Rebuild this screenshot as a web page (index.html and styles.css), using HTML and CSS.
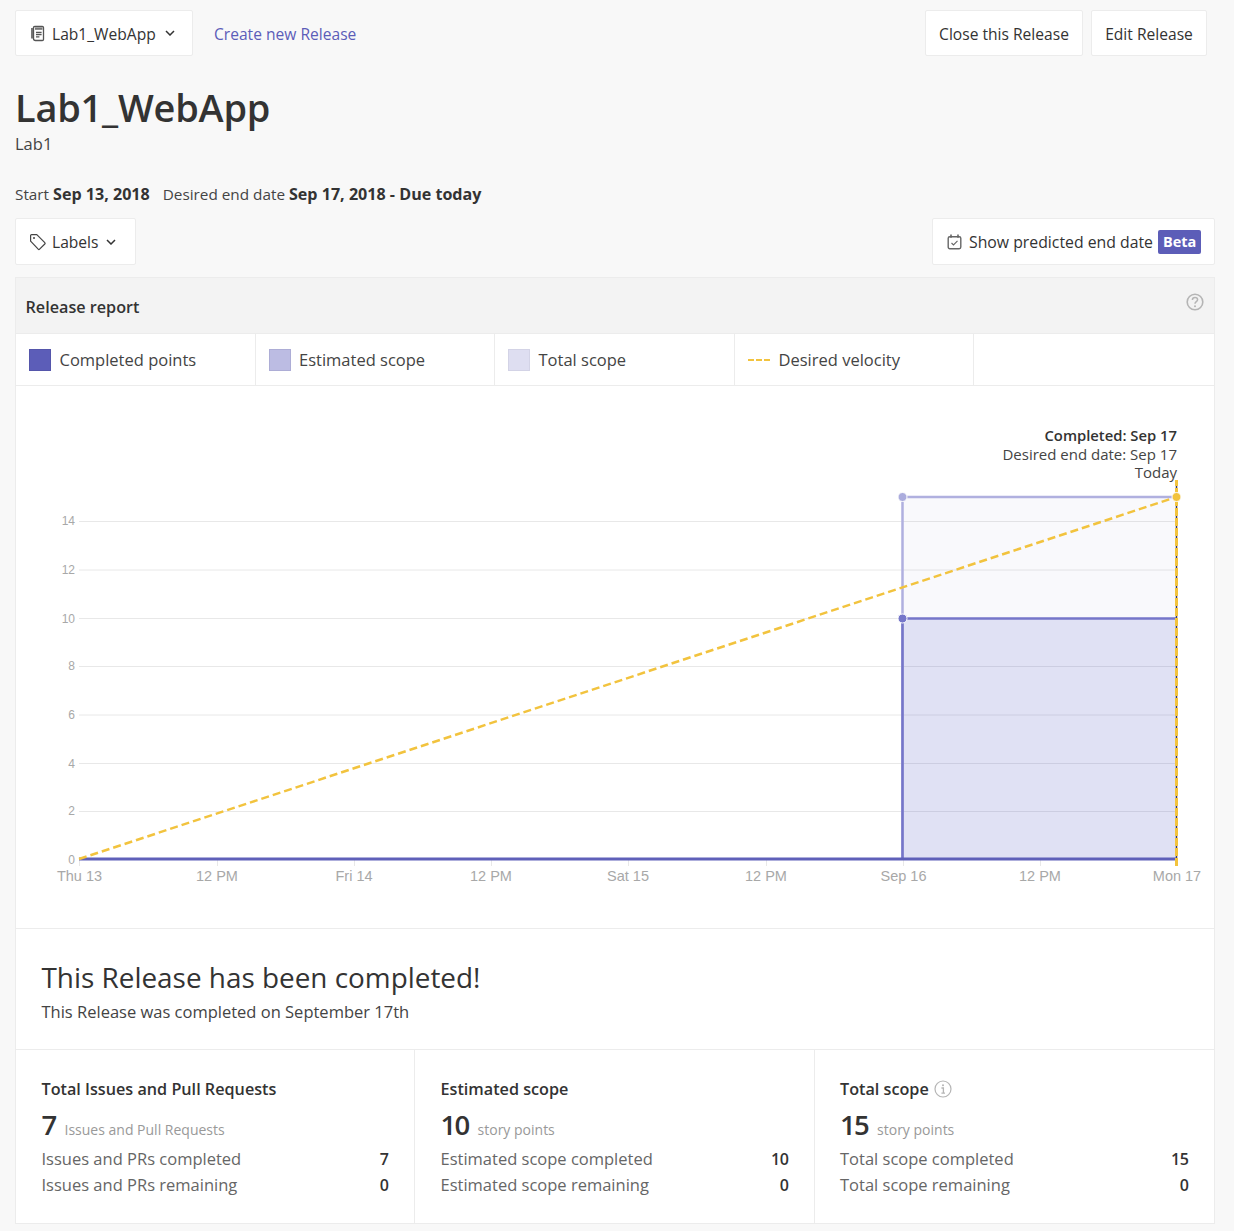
FILE: index.html
```html
<!DOCTYPE html>
<html lang="en">
<head>
<meta charset="utf-8">
<title>Lab1_WebApp</title>
<link rel="stylesheet" href="styles.css">
</head>
<body>
<div class="page">
  <div class="topbar">
    <button class="btn btn-project">
      <svg class="ico" width="16" height="17" viewBox="0 0 16 17" fill="none" stroke="#555" stroke-width="1.3"><path d="M3.500 13.500V2.600C3.500 1.900 4 1.500 4.700 1.500h7.600c.7 0 1.200.4 1.200 1.100v11.800c0 .6-.5 1.100-1.200 1.100H5.500c-1.200 0-2-.8-2-2z" fill="#fff"/><path d="M2 3v10.500" stroke-width="1.600"/><path d="M5 2.500h7.500v2.300H5z" fill="#777" stroke="none"/><path d="M6 7.500h5.600M6 9.700h5.600M6 11.900h3.400"/></svg>
      <span class="btn-text">Lab1_WebApp</span>
      <svg class="chev" width="10" height="6" viewBox="0 0 10 6" fill="none" stroke="#333" stroke-width="1.500"><path d="M1 1l4 4 4-4"/></svg>
    </button>
    <a class="create-link btn-text" href="#">Create new Release</a>
    <div class="topbar-right">
      <button class="btn btn-close"><span class="btn-text">Close this Release</span></button>
      <button class="btn btn-edit"><span class="btn-text">Edit Release</span></button>
    </div>
  </div>

  <h1 class="title">Lab1_WebApp</h1>
  <p class="subtitle">Lab1</p>
  <p class="dates">Start <b>Sep 13, 2018</b><span class="date-gap">Desired end date</span> <b>Sep 17, 2018 - Due today</b></p>

  <div class="filterbar">
    <button class="btn btn-labels">
      <svg class="ico" width="18" height="18" viewBox="0 0 18 18" fill="none" stroke="#444" stroke-width="1.200"><path d="M1.600 2.600c0-.6.4-1 1-1h5.200l8 8c.4.4.4 1 0 1.400l-5.200 5.200c-.4.4-1 .4-1.400 0l-7.600-8z" stroke-linejoin="round"/><circle cx="5" cy="5" r="1" fill="#444" stroke="none"/></svg>
      <span>Labels</span>
      <svg class="chev" width="10" height="6" viewBox="0 0 10 6" fill="none" stroke="#333" stroke-width="1.500"><path d="M1 1l4 4 4-4"/></svg>
    </button>
    <button class="btn btn-predict">
      <svg class="ico" width="15" height="16" viewBox="0 0 15 16" fill="none" stroke="#666" stroke-width="1.400"><rect x="1.200" y="2.700" width="12.600" height="12" rx="1.600"/><path d="M4 .6v3.200M11 .6v3.200" stroke-width="1.600"/><path d="M4.500 9l2 2 4-4.200" stroke-width="1.100"/></svg>
      <span>Show predicted end date</span>
      <span class="beta">Beta</span>
    </button>
  </div>

  <section class="panel">
    <header class="panel-head">
      <h2>Release report</h2>
      <svg class="help" width="18" height="18" viewBox="0 0 18 18" fill="none" stroke="#b5b5b5" stroke-width="1.600"><circle cx="9" cy="9" r="7.800"/><path d="M6.400 7c0-1.600 1.200-2.400 2.600-2.400s2.600.9 2.600 2.200c0 1.900-2.600 1.900-2.600 3.900" stroke-width="1.500"/><circle cx="9" cy="13.200" r="1" fill="#b5b5b5" stroke="none"/></svg>
    </header>
    <div class="legend">
      <div class="legend-item"><span class="swatch swatch-done"></span>Completed points</div>
      <div class="legend-item"><span class="swatch swatch-est"></span>Estimated scope</div>
      <div class="legend-item"><span class="swatch swatch-total"></span>Total scope</div>
      <div class="legend-item"><svg class="dash" width="22" height="2" viewBox="0 0 22 2"><path d="M0 1h6M8 1h6M16 1h6" stroke="#f2c33e" stroke-width="2"/></svg>Desired velocity</div>
    </div>

    <div class="chart">
      <svg class="chart-svg" width="1198" height="542" viewBox="16 386 1198 542">
        <g class="grid">
          <path d="M79 521.500H1177M79 570H1177M79 618.500H1177M79 666.500H1177M79 715H1177M79 763.500H1177M79 811.500H1177"/>
          <path d="M79.500 859v7M217.500 859v7M354.500 859v7M491.500 859v7M628.500 859v7M766.500 859v7M903.500 859v7M1040.500 859v7M1177.500 859v7"/>
        </g>
        <path d="M902.500 497H1176.500V859H902.500Z" fill="#5c5db8" fill-opacity=".04"/>
        <path d="M902.500 618.500H1176.500V859H902.500Z" fill="#5c62d0" fill-opacity=".16"/>
        <path d="M902.500 859V497H1176.500" fill="none" stroke="#b0b0df" stroke-width="2.500"/>
        <path d="M902.500 859V618.500H1176.500" fill="none" stroke="#7576c9" stroke-width="2.500"/>
        <path d="M79 859H1176.500" fill="none" stroke="#5f60b9" stroke-width="3"/>
        <path d="M1176.500 480V866" stroke="#3a3a60" stroke-width="1.500" stroke-dasharray="3 2" fill="none"/>
        <path d="M79 859L1176.500 497" fill="none" stroke="#f2c33e" stroke-width="2.500" stroke-dasharray="8 4"/>
        <path d="M1176.500 866V480" fill="none" stroke="#f2c33e" stroke-width="3" stroke-dasharray="8 2"/>
        <circle cx="902.500" cy="497" r="4.500" fill="#abacdd" stroke="#fff"/>
        <circle cx="902.500" cy="618.500" r="4.500" fill="#7576c9" stroke="#fff"/>
        <circle cx="1176.500" cy="497" r="4.500" fill="#f2c33e" stroke="#fff"/>
        <g class="y-labels">
          <text x="75" y="525">14</text><text x="75" y="574">12</text><text x="75" y="623">10</text><text x="75" y="670">8</text><text x="75" y="719">6</text><text x="75" y="768">4</text><text x="75" y="815">2</text><text x="75" y="864">0</text>
        </g>
        <g class="x-labels">
          <text x="79.500" y="881">Thu 13</text><text x="217" y="881">12 PM</text><text x="354" y="881">Fri 14</text><text x="491" y="881">12 PM</text><text x="628" y="881">Sat 15</text><text x="766" y="881">12 PM</text><text x="903.500" y="881">Sep 16</text><text x="1040" y="881">12 PM</text><text x="1177" y="881">Mon 17</text>
        </g>
        <g class="notes">
          <text class="note-strong" x="1177" y="441">Completed: Sep 17</text>
          <text x="1177" y="460">Desired end date: Sep 17</text>
          <text x="1177" y="478">Today</text>
        </g>
      </svg>
    </div>

    <div class="completed">
      <h3>This Release has been completed!</h3>
      <p>This Release was completed on September 17th</p>
    </div>

    <div class="stats">
      <div class="stat">
        <h4>Total Issues and Pull Requests</h4>
        <div class="big"><strong>7</strong><span>Issues and Pull Requests</span></div>
        <div class="row"><span>Issues and PRs completed</span><b>7</b></div>
        <div class="row"><span>Issues and PRs remaining</span><b>0</b></div>
      </div>
      <div class="stat">
        <h4>Estimated scope</h4>
        <div class="big"><strong>10</strong><span>story points</span></div>
        <div class="row"><span>Estimated scope completed</span><b>10</b></div>
        <div class="row"><span>Estimated scope remaining</span><b>0</b></div>
      </div>
      <div class="stat stat-last">
        <h4>Total scope
          <svg class="info" width="18" height="18" viewBox="0 0 18 18" fill="none" stroke="#b5b5b5" stroke-width="1.200"><circle cx="9" cy="9" r="8"/><path d="M7.400 8H9.400V13M7.400 13.200H11" stroke-width="1.300"/><circle cx="9" cy="5.200" r="1" fill="#b5b5b5" stroke="none"/></svg>
        </h4>
        <div class="big"><strong>15</strong><span>story points</span></div>
        <div class="row"><span>Total scope completed</span><b>15</b></div>
        <div class="row"><span>Total scope remaining</span><b>0</b></div>
      </div>
    </div>
  </section>
</div>
</body>
</html>
```
FILE: styles.css
```css
* { box-sizing: border-box; }
html, body { margin: 0; padding: 0; }
body {
  background: #f8f8f8;
  color: #333;
  font-family: "Open Sans", "Noto Sans", "Liberation Sans", sans-serif;
  font-size: 15.600px;
}
.page { padding: 10px 19px 8px 15px; width: 1234px; }
.btn {
  display: inline-flex;
  align-items: center;
  background: #fff;
  border: 1px solid #ececec;
  border-radius: 2px;
  color: #333;
  font: inherit;
  font-weight: 500;
  padding: 0;
}
.btn-text { padding-top: 2px; }
.topbar { display: flex; align-items: center; height: 46px; }
.btn-project { width: 178px; height: 46px; padding-left: 14px; gap: 6px; }
.chev { margin-left: 3px; }
.create-link { margin-left: 21px; color: #5c5db8; text-decoration: none; font-weight: 500; }
.topbar-right { margin-left: auto; display: flex; gap: 8px; margin-right: 8px; }
.btn-close { width: 158px; height: 46px; justify-content: center; }
.btn-edit { width: 116px; height: 46px; justify-content: center; }
.title { margin: 21px 0 0; font-size: 37.900px; line-height: 60px; font-weight: 600; color: #333; letter-spacing: -.2px; }
.subtitle { margin: -5px 0 0; font-size: 16.500px; line-height: 24px; font-weight: 400; color: #444; }
.dates { margin: 26px 0 0; font-size: 15.300px; line-height: 24px; color: #444; }
.dates b { font-size: 16.100px; font-weight: 700; color: #333; }
.date-gap { margin-left: 13px; }
.filterbar { display: flex; justify-content: space-between; margin-top: 12px; height: 47px; }
.btn-labels { width: 121px; height: 47px; padding-left: 13px; gap: 5px; }
.btn-predict { width: 283px; height: 47px; padding-left: 14px; font-size: 15.800px; }
.btn-predict .ico { margin-right: 7px; }
.beta {
  margin-left: 5px;
  background: #5c5db8;
  color: #fff;
  border-radius: 2px;
  height: 24px;
  line-height: 24px;
  padding: 0 5px;
  font-weight: 700;
  font-size: 14.500px;
}
.panel { margin-top: 12px; border: 1px solid #ececec; background: #fff; }
.panel-head {
  display: flex;
  justify-content: space-between;
  background: #f3f3f3;
  height: 56px;
  padding: 0 10px 0 9.500px;
  border-bottom: 1px solid #ececec;
}
.panel-head h2 { margin: 0; font-size: 16.200px; font-weight: 600; line-height: 58px; }
.help { margin: 15px 0 0; }
.legend { display: flex; height: 52px; border-bottom: 1px solid #ececec; }
.legend-item {
  display: flex;
  align-items: center;
  width: 239.500px;
  padding-left: 13px;
  border-right: 1px solid #ececec;
  font-size: 16.500px;
  color: #444;
}
.swatch { width: 22px; height: 22px; margin-right: 8.500px; flex: none; border: 1px solid; }
.swatch-done { background: #5c5db8; border-color: #5556ab; }
.swatch-est { background: #bcbce3; border-color: #adadd6; }
.swatch-total { background: #dedef1; border-color: #d3d3e6; }
.dash { margin-right: 9px; flex: none; }
.chart { height: 543px; border-bottom: 1px solid #ececec; }
.chart-svg { display: block; }
.grid path { stroke: #e8e8e8; stroke-width: 1; fill: none; }
.y-labels text { font-family: "Liberation Sans", sans-serif; font-size: 12px; fill: #a8a8a8; text-anchor: end; }
.x-labels text { font-family: "Liberation Sans", sans-serif; font-size: 14.500px; fill: #a8a8a8; text-anchor: middle; }
.notes text { font-size: 15px; fill: #444; text-anchor: end; }
.notes .note-strong { font-weight: 600; fill: #333; font-size: 14.800px; }
.completed { height: 121px; padding: 26px 25.500px 0; border-bottom: 1px solid #ececec; }
.completed h3 { margin: 0; font-size: 27.900px; font-weight: 400; line-height: 44px; color: #333; }
.completed p { margin: 1px 0 0; font-size: 16.500px; line-height: 24px; color: #444; }
.stats { display: grid; grid-template-columns: 399px 400px 1fr; height: 173px; }
.stat { padding: 26px 25.500px 0 25.500px; border-right: 1px solid #ececec; }
.stat-last { border-right: 0; padding-left: 25px; }
.stat h4 { display: flex; align-items: center; gap: 5px; margin: 0; height: 25px; font-size: 16.200px; font-weight: 600; color: #333; }
.big { display: flex; align-items: baseline; gap: 9px; height: 45px; }
.big strong { font-size: 27.500px; font-weight: 600; line-height: 48px; color: #333; letter-spacing: -1.700px; }
.big span { font-size: 14px; color: #999; }
.row { display: flex; justify-content: space-between; font-size: 16.500px; line-height: 26px; color: #666; }
.row b { font-size: 16px; font-weight: 600; color: #333; letter-spacing: -.4px; }
```
